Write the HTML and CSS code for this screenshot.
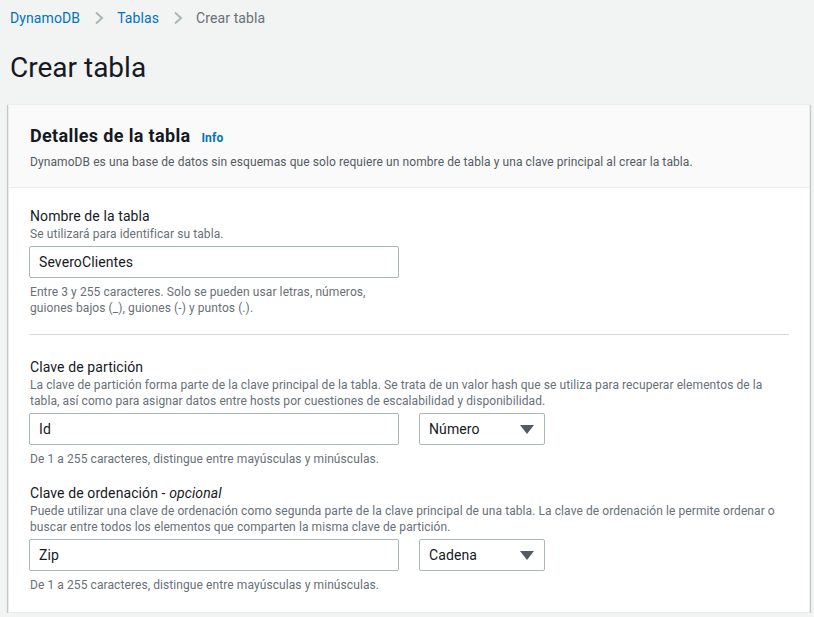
FILE: index.html
```html
<!DOCTYPE html>
<html lang="es">
<head>
  <meta charset="UTF-8" />
  <title>Crear tabla</title>
  <link rel="stylesheet" href="styles.css">
</head>
<body>
  <nav class="breadcrumbs">
    <a href="#">DynamoDB</a>
    <span class="sep"><svg width="10" height="14" viewBox="0 0 10 14"><path d="M2 1.5 L8 7 L2 12.5" fill="none" stroke="#aab7b8" stroke-width="2"/></svg></span>
    <a href="#">Tablas</a>
    <span class="sep"><svg width="10" height="14" viewBox="0 0 10 14"><path d="M2 1.5 L8 7 L2 12.5" fill="none" stroke="#aab7b8" stroke-width="2"/></svg></span>
    <span class="current">Crear tabla</span>
  </nav>

  <h1>Crear tabla</h1>

  <div class="panel">
    <div class="panel-header">
      <h2>Detalles de la tabla <a href="#" class="info">Info</a></h2>
      <p>DynamoDB es una base de datos sin esquemas que solo requiere un nombre de tabla y una clave principal al crear la tabla.</p>
    </div>

    <div class="panel-body">
      <!-- Nombre -->
      <div class="field">
        <label>Nombre de la tabla</label>
        <p class="desc">Se utilizará para identificar su tabla.</p>
        <div class="row">
          <div class="input">SeveroClientes</div>
        </div>
        <p class="hint narrow">Entre 3 y 255 caracteres. Solo se pueden usar letras, números, guiones bajos (_), guiones (-) y puntos (.).</p>
      </div>

      <hr class="divider">

      <!-- Clave de particion -->
      <div class="field">
        <label>Clave de partición</label>
        <p class="desc">La clave de partición forma parte de la clave principal de la tabla. Se trata de un valor hash que se utiliza para recuperar elementos de la tabla, así como para asignar datos entre hosts por cuestiones de escalabilidad y disponibilidad.</p>
        <div class="row">
          <div class="input">Id</div>
          <div class="select">Número <span class="caret"></span></div>
        </div>
        <p class="hint">De 1 a 255 caracteres, distingue entre mayúsculas y minúsculas.</p>
      </div>

      <!-- Clave de ordenacion -->
      <div class="field">
        <label>Clave de ordenación - <i>opcional</i></label>
        <p class="desc">Puede utilizar una clave de ordenación como segunda parte de la clave principal de una tabla. La clave de ordenación le permite ordenar o buscar entre todos los elementos que comparten la misma clave de partición.</p>
        <div class="row">
          <div class="input">Zip</div>
          <div class="select">Cadena <span class="caret"></span></div>
        </div>
        <p class="hint">De 1 a 255 caracteres, distingue entre mayúsculas y minúsculas.</p>
      </div>
    </div>
  </div>
</body>
</html>
```

FILE: styles.css
```css
* {
  box-sizing: border-box;
}

body {
  margin: 0;
  padding: 0 4px 0 8px;
  background-color: #f2f3f3;
  font-family: Roboto, "Noto Sans", sans-serif;
  color: #16191f;
}

.breadcrumbs {
  display: flex;
  align-items: center;
  height: 36px;
  padding-left: 2px;
  font-size: 14px;
  letter-spacing: 0.1px;
}

.breadcrumbs a {
  color: #0073bb;
  text-decoration: none;
}

.breadcrumbs .sep {
  display: flex;
  margin: 0 13px 0 14px;
}

.breadcrumbs .current {
  color: #687078;
}

h1 {
  margin: 14px 0 18px 2px;
  font-size: 28px;
  font-weight: 400;
  line-height: 36px;
}

.panel {
  background: #fff;
  border: 1px solid #eaeded;
  box-shadow: 0 1px 1px 0 rgba(0, 28, 36, 0.3), 1px 1px 1px 0 rgba(0, 28, 36, 0.15), -1px 1px 1px 0 rgba(0, 28, 36, 0.15);
}

.panel-header {
  background: #fafafa;
  border-bottom: 1px solid #eaeded;
  padding: 18px 20px 17px 21px;
}

.panel-header h2 {
  margin: 0;
  font-size: 18px;
  font-weight: 700;
  line-height: 26px;
  letter-spacing: 0.35px;
}

.info {
  margin-left: 6px;
  font-size: 12px;
  font-weight: 700;
  letter-spacing: 0.2px;
  color: #0073bb;
  text-decoration: none;
}

.panel-header p {
  margin: 3px 0 0;
  font-size: 12px;
  line-height: 16px;
  letter-spacing: 0.085px;
  color: #545b64;
}

.panel-body {
  display: flex;
  flex-direction: column;
  padding: 18px 20px 19px;
}

.field {
  margin-bottom: 16px;
}

.field:last-child {
  margin-bottom: 0;
}

.field label {
  display: block;
  font-size: 14px;
  line-height: 20px;
  letter-spacing: 0.1px;
  margin-left: 1px;
}

.desc {
  margin: 0 0 4px 1px;
  font-size: 12px;
  line-height: 16px;
  letter-spacing: 0.085px;
  color: #687078;
}

.row {
  display: flex;
  gap: 20px;
}

.input, .select {
  height: 32px;
  border: 1px solid #aab7b8;
  border-radius: 2px;
  background: #fff;
  font-size: 14px;
  line-height: 30px;
  letter-spacing: 0.1px;
  padding: 0 9px;
}

.input {
  width: 370px;
}

.select {
  width: 126px;
  display: flex;
  justify-content: space-between;
  align-items: center;
}

.caret {
  width: 0;
  height: 0;
  border-left: 7px solid transparent;
  border-right: 7px solid transparent;
  border-top: 9px solid #545b64;
  margin-right: 1px;
}

.hint {
  margin: 6px 0 0 1px;
  font-size: 12px;
  line-height: 16px;
  letter-spacing: 0.085px;
  color: #687078;
}

.hint.narrow {
  max-width: 360px;
}

.divider {
  width: 100%;
  border: 0;
  border-top: 1px solid #d5dbdb;
  margin: 2px 0 22px;
}
```
